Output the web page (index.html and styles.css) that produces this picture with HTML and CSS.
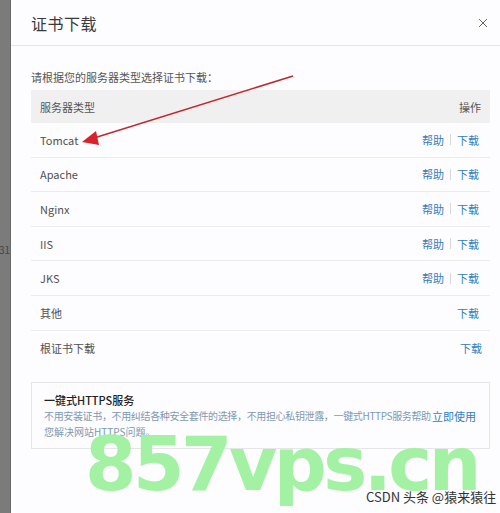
FILE: index.html
```html
<!DOCTYPE html>
<html lang="zh">
<head>
<meta charset="utf-8">
<title>证书下载</title>
<link rel="stylesheet" href="styles.css">
</head>
<body>
<div class="backdrop"><span class="peek">31</span></div>
<div class="modal">
  <div class="modal-header">
    <span class="title">证书下载</span>
    <svg class="close" width="10" height="10" viewBox="0 0 10 10"><path d="M1 1L9 9M9 1L1 9" stroke="#666" stroke-width="1"/></svg>
  </div>
  <div class="modal-body">
    <p class="hint">请根据您的服务器类型选择证书下载：</p>
    <div class="table">
      <div class="row head"><span>服务器类型</span><span>操作</span></div>
      <div class="row"><span>Tomcat</span><span class="ops"><a>帮助</a><i class="sep"></i><a>下载</a></span></div>
      <div class="row"><span>Apache</span><span class="ops"><a>帮助</a><i class="sep"></i><a>下载</a></span></div>
      <div class="row"><span>Nginx</span><span class="ops"><a>帮助</a><i class="sep"></i><a>下载</a></span></div>
      <div class="row"><span>IIS</span><span class="ops"><a>帮助</a><i class="sep"></i><a>下载</a></span></div>
      <div class="row"><span>JKS</span><span class="ops"><a>帮助</a><i class="sep"></i><a>下载</a></span></div>
      <div class="row"><span>其他</span><span class="ops"><a>下载</a></span></div>
      <div class="row last"><span>根证书下载</span><span class="ops shift"><a>下载</a></span></div>
    </div>
    <div class="promo">
      <div class="promo-title">一键式HTTPS服务</div>
      <div class="promo-line"><span class="promo-text">不用安装证书，不用纠结各种安全套件的选择，不用担心私钥泄露，一键式HTTPS服务帮助</span><a class="use">立即使用</a></div>
      <div class="promo-line">您解决网站HTTPS问题。</div>
    </div>
  </div>
</div>
<svg class="arrow" width="500" height="513" viewBox="0 0 500 513">
  <line x1="293" y1="76" x2="94" y2="138" stroke="#c0282d" stroke-width="1.6"/>
  <polygon points="82,142 96,131 99,145" fill="#d8232a"/>
</svg>
<div class="watermark">857vps.cn</div>
<div class="credit">CSDN 头条 @猿来猿往</div>
</body>
</html>
```
FILE: styles.css
```css
* { box-sizing: border-box; }
html, body { margin: 0; padding: 0; }
body {
  width: 500px;
  height: 513px;
  display: flex;
  overflow: hidden;
  position: relative;
  font-family: "Noto Sans CJK SC", "Noto Sans", sans-serif;
  color: #444;
  background: #fdfcfe;
}
.backdrop {
  width: 11px;
  flex: none;
  background: #7b7b7b;
  position: relative;
  border-right: 1px solid #6a6a6a;
}
.peek {
  position: absolute;
  left: -1px;
  top: 242px;
  font-size: 10px;
  color: #444;
}
.modal {
  flex: 1;
  min-width: 0;
  overflow: hidden;
  background: #fdfcfe;
}
.modal-header {
  height: 46px;
  border-bottom: 1px solid #e6e5e8;
  display: flex;
  align-items: center;
  justify-content: space-between;
  padding: 0 12px 0 20px;
}
.title {
  font-size: 16px;
  color: #3a3a3a;
  letter-spacing: 0.5px;
}
.close { display: block; margin-top: 1px; }
.modal-body {
  padding: 0 10px 0 20px;
}
.hint {
  margin: 23px 0 5px;
  font-size: 11px;
  line-height: 16px;
  color: #555;
}
.table { display: flex; flex-direction: column; }
.row {
  height: 34.6px;
  display: flex;
  align-items: center;
  justify-content: space-between;
  padding: 0 11px 0 9px;
  border-bottom: 1px solid #eceaee;
  font-size: 11px;
  color: #505050;
}
.row.head {
  height: 33px;
  background: #f0f0f1;
  border-bottom: none;
  color: #555;
  padding-right: 9px;
}
.row.last { border-bottom: none; }
.ops { display: flex; align-items: center; }
.ops.shift { margin-right: -3px; }
.ops a { color: #2f7fbf; }
.sep {
  width: 1px;
  height: 11px;
  background: #d8d8d8;
  margin: 0 6px;
}
.promo {
  margin-top: 17px;
  height: 67px;
  border: 1px solid #e6e5e8;
  padding: 9px 13px 0 12px;
}
.promo-title {
  font-size: 11px;
  color: #222;
  font-weight: 500;
  line-height: 16px;
}
.promo-line {
  font-size: 10px;
  line-height: 16px;
  color: #7d99b2;
  display: flex;
  justify-content: space-between;
  white-space: nowrap;
}
.promo-text { letter-spacing: -0.35px; }
.use {
  color: #2f7fbf;
  font-size: 11px;
}
.arrow {
  position: absolute;
  left: 0;
  top: 0;
  pointer-events: none;
}
.watermark {
  position: absolute;
  left: 85px;
  top: 427px;
  font-family: "DejaVu Sans", sans-serif;
  font-weight: bold;
  font-size: 74px;
  letter-spacing: -3.5px;
  color: #a3f1a2;
  line-height: 1;
}
.credit {
  position: absolute;
  left: 366px;
  top: 487px;
  font-size: 13px;
  color: #333;
  white-space: nowrap;
}
```
